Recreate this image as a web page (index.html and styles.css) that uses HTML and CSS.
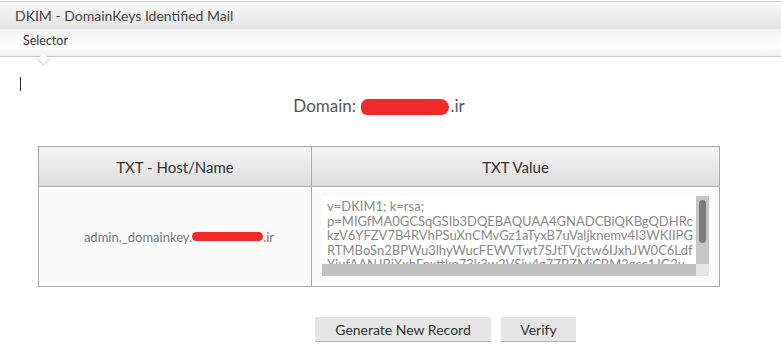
FILE: index.html
```html
<!DOCTYPE html>
<html>
<head>
<meta charset="utf-8">
<link rel="stylesheet" href="styles.css">
</head>
<body>
<div class="panel-head">DKIM - DomainKeys Identified Mail</div>
<div class="tabs">
  <div class="tab active">Selector</div>
</div>
<div class="content">
  <div class="caret-row"><span class="caret"></span></div>
  <div class="wrap">
    <div class="domain">Domain: <span class="redact big"></span>.ir</div>
    <table class="records">
      <thead>
        <tr><th class="c1">TXT - Host/Name</th><th class="c2">TXT Value</th></tr>
      </thead>
      <tbody>
        <tr>
          <td class="host">admin._domainkey.<span class="redact small"></span>.ir</td>
          <td class="val">
            <div class="ta">
              <div class="txt">
                <div>v=DKIM1; k=rsa;</div>
                <div>p=MIGfMA0GCSqGSIb3DQEBAQUAA4GNADCBiQKBgQDHRc</div>
                <div>kzV6YFZV7B4RVhPSuXnCMvGz1aTyxB7uValjknemv4I3WKIIPG</div>
                <div>RTMBoSn2BPWu3lhyWucFEWVTwt7SJtTVjctw6IJxhJW0C6Ldf</div>
                <div>YiufAANJBiXxhFpxttkq73k3w2VSju4g77BZMjCBM2gcc1JG2u</div>
              </div>
              <div class="vbar"><div class="thumb"></div></div>
              <div class="hbar"></div>
              <div class="corner"></div>
            </div>
          </td>
        </tr>
      </tbody>
    </table>
    <div class="actions">
      <button class="btn wide">Generate New Record</button>
      <button class="btn">Verify</button>
    </div>
  </div>
</div>
</body>
</html>
```

FILE: styles.css
```css
* { box-sizing: border-box; }
html, body { margin: 0; padding: 0; background: #fff; }
body {
  font-family: Lato, "Open Sans", sans-serif;
  color: #333;
  padding-top: 1px;
}
.panel-head {
  height: 28px;
  border-top: 1px solid #d0d0d0;
  background: linear-gradient(#f9f9f9, #e3e3e3);
  padding-left: 15px;
  font-size: 14px;
  line-height: 27px;
  color: #444;
}
.tabs {
  height: 28px;
  border-bottom: 1px solid #c8c8c8;
  background: linear-gradient(#f3f3f3, #fbfbfb 40%, #fdfdfd 70%, #eeeeee);
  display: flex;
  padding-left: 23px;
}
.tab {
  position: relative;
  font-size: 12.5px;
  line-height: 24px;
  color: #333;
}
.tab.active::after {
  content: "";
  position: absolute;
  left: 16px;
  top: 26px;
  width: 8px;
  height: 8px;
  background: #fff;
  border-right: 1px solid #d0d0d0;
  border-bottom: 1px solid #d0d0d0;
  transform: rotate(45deg);
}
.content { padding-top: 20px; }
.caret-row { padding-left: 20px; height: 14px; }
.caret { display: block; width: 1px; height: 14px; background: #333; }
.wrap { width: 682px; margin-left: 38px; }
.domain {
  text-align: center;
  font-size: 17px;
  color: #555;
  margin-top: 5px;
  line-height: 20px;
}
.redact {
  display: inline-block;
  background: #ef2a2a;
  vertical-align: middle;
}
.redact.big { width: 88px; height: 16px; border-radius: 8px 10px 9px 7px; margin: -2px 1px 0 1px; }
.redact.small { width: 71px; height: 9px; border-radius: 5px; margin: -3px 0 0 0; }
.records {
  margin-top: 30px;
  width: 682px;
  border-collapse: collapse;
  border: 1px solid #aaa;
}
.records th {
  height: 40px;
  background: linear-gradient(#f5f5f5, #dcdcdc);
  font-weight: normal;
  font-size: 15px;
  color: #333;
  border: 1px solid #aaa;
  padding: 0;
}
.records th.c1 { width: 273px; }
.records td {
  border: 1px solid #aaa;
  background: #fbfbfb;
  height: 100px;
  padding: 0;
}
.host {
  text-align: center;
  font-size: 13px;
  color: #777;
  padding-left: 8px !important;
}
.val { padding: 9px 10px 10px 10px !important; }
.ta {
  display: grid;
  grid-template-columns: 1fr 13px;
  grid-template-rows: 68px 12px;
  background: #fff;
}
.txt {
  overflow: hidden;
  font-size: 13px;
  line-height: 14.5px;
  color: #8a8a8a;
  white-space: nowrap;
  padding: 3px 5px;
}
.vbar {
  background: #c6c6c6;
  padding: 4px 3px 0 3px;
}
.thumb {
  height: 43px;
  background: #7a7a7a;
  border-radius: 4px;
}
.hbar { background: #c1c1c1; }
.corner { background: #e6e6e6; }
.actions {
  display: flex;
  gap: 10px;
  margin-top: 30px;
  padding-left: 277px;
}
.btn {
  font-family: inherit;
  font-size: 14px;
  color: #333;
  background: #e5e5e5;
  border: none;
  border-bottom: 1px solid #b5b5b5;
  height: 25px;
  padding: 0;
  width: 75px;
}
.btn.wide { width: 176px; }
```
